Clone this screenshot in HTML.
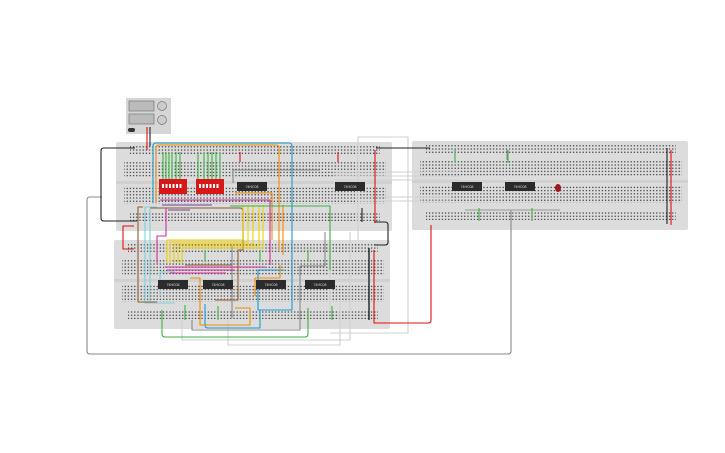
<!DOCTYPE html>
<html><head><style>
html,body{margin:0;padding:0;background:#fff;width:725px;height:453px;overflow:hidden}
svg{display:block}
</style></head><body>
<svg width="725" height="453" viewBox="0 0 725 453" xmlns="http://www.w3.org/2000/svg" font-family="Liberation Sans, sans-serif">
<defs>
<pattern id="d" x="0" y="0" width="3.2" height="3.2" patternUnits="userSpaceOnUse"><circle cx="1.6" cy="1.6" r="0.7" fill="#333"/></pattern>
<g id="bb">
<rect x="0" y="0" width="276" height="89" rx="2" fill="#dcdcdc"/>
<rect x="14" y="4" width="250" height="9" fill="url(#d)"/>
<rect x="8" y="19" width="262" height="17" fill="url(#d)"/>
<rect x="8" y="45" width="262" height="17" fill="url(#d)"/>
<rect x="14" y="70" width="250" height="9" fill="url(#d)"/>
<line x1="0" y1="40.5" x2="276" y2="40.5" stroke="#d0d0d0" stroke-width="3"/>
</g>
<g id="chip"><rect x="0" y="0" width="30" height="9" fill="#2b2b2b"/><text x="15" y="6" font-size="3.5" fill="#ddd" text-anchor="middle">74HC08</text></g>
</defs>

<use href="#bb" x="116" y="142"/>
<use href="#bb" x="114" y="240"/>
<use href="#bb" x="412" y="141"/>

<rect x="126" y="98" width="45" height="36" fill="#d6d6d6"/>
<rect x="129" y="101" width="25" height="10" fill="#bbb" stroke="#777" stroke-width="0.7"/>
<rect x="129" y="114" width="25" height="10" fill="#bbb" stroke="#777" stroke-width="0.7"/>
<circle cx="162" cy="106" r="4.5" fill="#ccc" stroke="#777" stroke-width="0.7"/>
<circle cx="162" cy="120" r="4.5" fill="#ccc" stroke="#777" stroke-width="0.7"/>
<rect x="128" y="128" width="7" height="4" rx="2" fill="#333"/>

<g fill="none" stroke-width="1.1" stroke-linejoin="round">
<g stroke="#d0d0d0">
<path d="M358,240 V137 H408 V333 H330"/>
<path d="M335,172 H460"/><path d="M335,176 H460"/><path d="M335,180 H460"/>
<path d="M360,197 H450"/><path d="M360,201 H450"/>
<path d="M350,232 V340 H182 V320"/>
<path d="M228,320 V345 H340 V300"/>
<path d="M300,250 H330 V310"/>
</g>
<g stroke="#888">
<path d="M102,197 H90 Q87,197 87,200 V351 Q87,354 90,354 H508 Q511,354 511,351 V210"/>
<path d="M233,183 V170 H320"/>
<path d="M192,320 V330 H300 V275"/>
<path d="M300,276 V266 H325 V232"/>
<path d="M465,210 H560" stroke="#999"/>
<path d="M507,150 V160" /><path d="M232,318 V245"/>
</g>
<g stroke="#222">
<path d="M135,148 H104 Q101,148 101,151 V218 Q101,221 104,221 H137"/>
<path d="M376,148 H430"/>
<path d="M374,222 H385 Q388,222 388,225 V242 Q388,245 385,245 H374"/>
<path d="M369,248 V320" stroke-width="1.4"/>
<path d="M667,148 V224"/>
<path d="M362,208 V222"/><path d="M150,127 V146"/>
</g>
<g stroke="#e01010">
<path d="M375,150 V223"/>
<path d="M374,250 V323 H428 Q431,323 431,320 V225"/>
<path d="M671,150 V225"/>
<path d="M134,226 H123 V249 H134"/>
<path d="M147,127 V150"/><path d="M240,152 V162"/><path d="M338,152 V162"/>
</g>
<g stroke="#1a9ad8">
<path d="M153,203 V146 Q153,143 156,143 H289 Q292,143 292,146 V297"/>
<path d="M292,297 V310 H258 V270 H284"/>
<path d="M205,304 V325 Q205,328 208,328 H260 V310"/>
</g>
<g stroke="#7fcde0">
<path d="M157,207 H145 V303 H175"/>
<path d="M150,303 V209"/><path d="M160,296 V272 H175"/>
</g>
<g stroke="#f08c00">
<path d="M156,203 V148 Q156,145 159,145 H276 Q279,145 279,148 V250"/>
<path d="M235,193 H272 V240"/>
<path d="M190,278 H200 V325 H250 V308 H235"/>
<path d="M255,296 V278 H280 V265"/>
<path d="M283,205 V255"/>
</g>
<g stroke="#9a7450" stroke-width="1.3">
<path d="M143,207 H138 V302 H157"/>
<path d="M150,208 H240 Q243,208 243,212 V250 H238 V300 H215"/>
<path d="M185,265 H232"/>
</g>
<g stroke="#f2d000">
<path d="M167,263 V240 H243 V205"/>
<path d="M170,263 V242 H248 V205"/>
<path d="M174,263 V244 H253 V205"/>
<path d="M178,263 V246 H259 V205"/>
<path d="M182,263 V248 H263 V205"/>
</g>
<g stroke="#d0309c">
<path d="M157,263 V236 H166 V208"/>
<path d="M167,270 H235"/><path d="M170,273 H226"/>
<path d="M160,200 H270 V265"/>
<path d="M165,267 H265"/>
</g>
<g stroke="#6a3fa0"><path d="M162,205 H212"/><path d="M168,210 H190"/></g>
<g stroke="#3cb043">
<path d="M163,152 V180"/><path d="M166,152 V180"/><path d="M169,152 V180"/><path d="M172,152 V180"/><path d="M176,152 V180"/><path d="M180,152 V180"/>
<path d="M198,152 V180"/><path d="M204,152 V180"/><path d="M208,152 V180"/><path d="M212,152 V180"/><path d="M216,152 V180"/><path d="M220,152 V180"/>
<path d="M230,206 H330 V270"/>
<path d="M162,310 V334 Q162,337 165,337 H305 Q308,337 308,334 V308"/>
<path d="M185,305 V320"/><path d="M218,306 V320"/><path d="M205,250 V262"/>
<path d="M260,250 V262"/><path d="M308,250 V262"/><path d="M332,306 V320"/>
<path d="M455,150 V163"/><path d="M508,150 V163"/><path d="M479,208 V221"/><path d="M532,208 V221"/>
</g>
</g>

<rect x="159" y="179" width="28" height="15" fill="#d81818"/>
<rect x="196" y="179" width="28" height="15" fill="#d81818"/>
<g fill="#fff">
<rect x="162" y="184" width="2" height="4"/><rect x="165.5" y="184" width="2" height="4"/><rect x="169" y="184" width="2" height="4"/><rect x="172.5" y="184" width="2" height="4"/><rect x="176" y="184" width="2" height="4"/><rect x="179.5" y="184" width="2" height="4"/>
<rect x="199" y="184" width="2" height="4"/><rect x="202.5" y="184" width="2" height="4"/><rect x="206" y="184" width="2" height="4"/><rect x="209.5" y="184" width="2" height="4"/><rect x="213" y="184" width="2" height="4"/><rect x="216.5" y="184" width="2" height="4"/>
</g>

<use href="#chip" x="237" y="182"/>
<use href="#chip" x="335" y="182"/>
<use href="#chip" x="158" y="280"/>
<use href="#chip" x="203" y="280"/>
<use href="#chip" x="256" y="280"/>
<use href="#chip" x="305" y="280"/>
<use href="#chip" x="452" y="182"/>
<use href="#chip" x="505" y="182"/>
<ellipse cx="558" cy="188" rx="3" ry="4" fill="#a01818"/>
</svg>
</body></html>
